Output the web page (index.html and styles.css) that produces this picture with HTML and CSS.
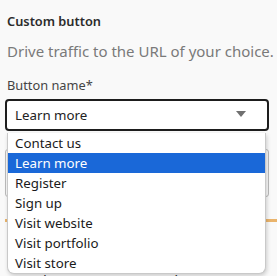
FILE: index.html
```html
<!DOCTYPE html>
<html>
<head>
    <title>Custom button</title>
    <link rel="stylesheet" href="styles.css">
</head>
<body>
    <div class="panel">
        <h2 class="title">Custom button</h2>
        <p class="desc">Drive traffic to the URL of your choice.</p>

        <label class="label" for="btn-name">Button name*</label>
        <div class="select-wrap">
            <div class="select" id="btn-name">
                <span>Learn more</span>
                <svg class="caret" width="10" height="6" viewBox="0 0 10 6"><path d="M0 0H10L5 6Z" fill="#707070"/></svg>
            </div>

            <ul class="options">
                <li>Contact us</li>
                <li class="active">Learn more</li>
                <li>Register</li>
                <li>Sign up</li>
                <li>Visit website</li>
                <li>Visit portfolio</li>
                <li>Visit store</li>
            </ul>
        </div>

        <!-- content hidden under the open list -->
        <div class="under">
            <div class="under-box"></div>
            <div class="accent"></div>
            <p class="under-text">Make your page stand out</p>
        </div>
    </div>
</body>
</html>
```

FILE: styles.css
```css
body {
    margin: 0;
    background-color: #f9f9f9;
    font-family: "Noto Sans", "Open Sans", sans-serif;
    overflow: hidden;
}

.panel {
    padding: 11px 8px 0 5px;
}

.title {
    font-size: 12.8px;
    font-weight: 600;
    color: #2b2b2b;
    margin: 0 0 0 2px;
    line-height: 20px;
}

.desc {
    font-size: 15px;
    color: #7a7a7a;
    margin: 8px 0 0 2px;
    line-height: 24px;
    white-space: nowrap;
}

.label {
    display: block;
    font-size: 12.8px;
    color: #444;
    margin: 12px 0 0 2px;
    line-height: 20px;
}

.select-wrap {
    position: relative;
    margin-top: 4px;
}

.select {
    display: flex;
    align-items: center;
    justify-content: space-between;
    height: 28px;
    border: 2px solid #1d1d1d;
    border-radius: 4px;
    background-color: #fff;
    padding: 0 21px 0 8px;
    font-size: 13.3px;
    color: #222;
}

.caret {
    display: block;
    margin-top: -2px;
}

.options {
    position: absolute;
    top: 34px;
    left: 2px;
    right: 3px;
    margin: 0;
    padding: 0;
    list-style: none;
    background-color: #fff;
    border: 1px solid #c9c9c9;
    border-top: none;
    border-radius: 0 0 7px 7px;
    box-shadow: 1px 2px 4px rgba(0, 0, 0, 0.18);
    z-index: 2;
}

.options li {
    height: 20px;
    line-height: 20px;
    padding-left: 7px;
    font-size: 13.3px;
    color: #1a1a1a;
}

.options li.active {
    background-color: #1a68d8;
    color: #fff;
}

.under {
    margin-top: 18px;
}

.under-box {
    height: 46px;
    border: 1px solid #bbb;
    border-radius: 3px;
}

.accent {
    height: 3px;
    background-color: #eab46c;
    margin-top: 22px;
    margin-right: -8px;
}

.under-text {
    margin: 48px 0 0 16px;
    font-size: 15px;
    line-height: 20px;
    color: #333;
}
```
